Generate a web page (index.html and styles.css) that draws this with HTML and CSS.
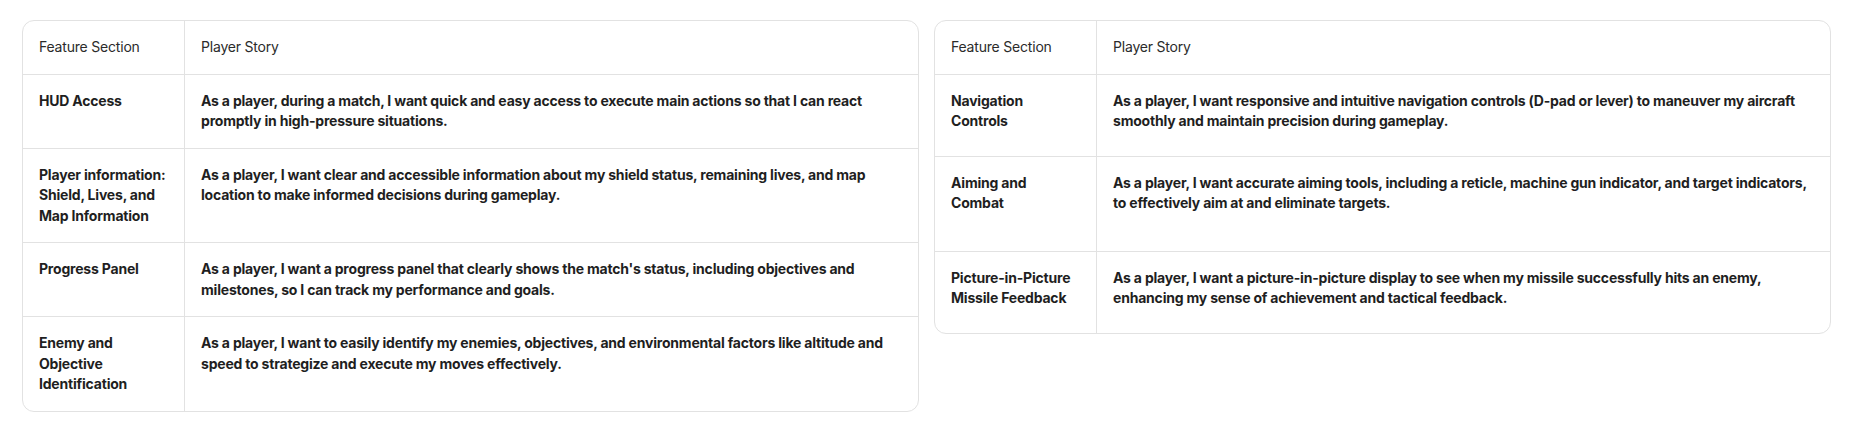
FILE: index.html
```html
<!DOCTYPE html>
<html lang="en">
<head>
<meta charset="utf-8">
<title>Player Stories</title>
<link rel="stylesheet" href="styles.css">
</head>
<body>
<main class="page">
  <section class="card">
    <div class="row head">
      <div class="cell c1">Feature Section</div>
      <div class="cell c2">Player Story</div>
    </div>
    <div class="row">
      <div class="cell c1">HUD Access</div>
      <div class="cell c2">As a player, during a match, I want quick and easy access to execute main actions so that I can react promptly in high-pressure situations.</div>
    </div>
    <div class="row">
      <div class="cell c1">Player information: Shield, Lives, and Map Information</div>
      <div class="cell c2">As a player, I want clear and accessible information about my shield status, remaining lives, and map location to make informed decisions during gameplay.</div>
    </div>
    <div class="row">
      <div class="cell c1">Progress Panel</div>
      <div class="cell c2">As a player, I want a progress panel that clearly shows the match's status, including objectives and milestones, so I can track my performance and goals.</div>
    </div>
    <div class="row">
      <div class="cell c1">Enemy and Objective Identification</div>
      <div class="cell c2">As a player, I want to easily identify my enemies, objectives, and environmental factors like altitude and speed to strategize and execute my moves effectively.</div>
    </div>
  </section>
  <section class="card">
    <div class="row head">
      <div class="cell c1">Feature Section</div>
      <div class="cell c2">Player Story</div>
    </div>
    <div class="row tall-s">
      <div class="cell c1">Navigation Controls</div>
      <div class="cell c2">As a player, I want responsive and intuitive navigation controls (D-pad or lever) to maneuver my aircraft smoothly and maintain precision during gameplay.</div>
    </div>
    <div class="row tall-l">
      <div class="cell c1">Aiming and Combat</div>
      <div class="cell c2">As a player, I want accurate aiming tools, including a reticle, machine gun indicator, and target indicators, to effectively aim at and eliminate targets.</div>
    </div>
    <div class="row tall-s">
      <div class="cell c1">Picture-in-Picture Missile Feedback</div>
      <div class="cell c2">As a player, I want a picture-in-picture display to see when my missile successfully hits an enemy, enhancing my sense of achievement and tactical feedback.</div>
    </div>
  </section>
</main>
</body>
</html>
```

FILE: styles.css
```css
* { box-sizing: border-box; }

html, body {
  margin: 0;
  background: #ffffff;
}

body {
  font-family: Inter, "Noto Sans", "Liberation Sans", sans-serif;
  font-size: 14px;
  line-height: 20.5px;
  color: #222222;
}

.page {
  display: grid;
  grid-template-columns: 897px 897px;
  column-gap: 15px;
  align-items: start;
  padding: 20px 0 0 22px;
}

.card {
  border: 1px solid #e2e2e2;
  border-radius: 12px;
  overflow: hidden;
}

.row {
  display: grid;
  grid-template-columns: 162px 1fr;
  border-top: 1px solid #e2e2e2;
}

.row.head {
  border-top: none;
}

.row.tall-s { min-height: 82px; }
.row.tall-l { min-height: 95px; }

.cell {
  padding: 16px;
  font-weight: 700;
  color: #1f1f1f;
  letter-spacing: -0.2px;
}

.head .cell {
  font-weight: 400;
  color: #2b2b2b;
}

.c1 {
  border-right: 1px solid #e2e2e2;
}
```
